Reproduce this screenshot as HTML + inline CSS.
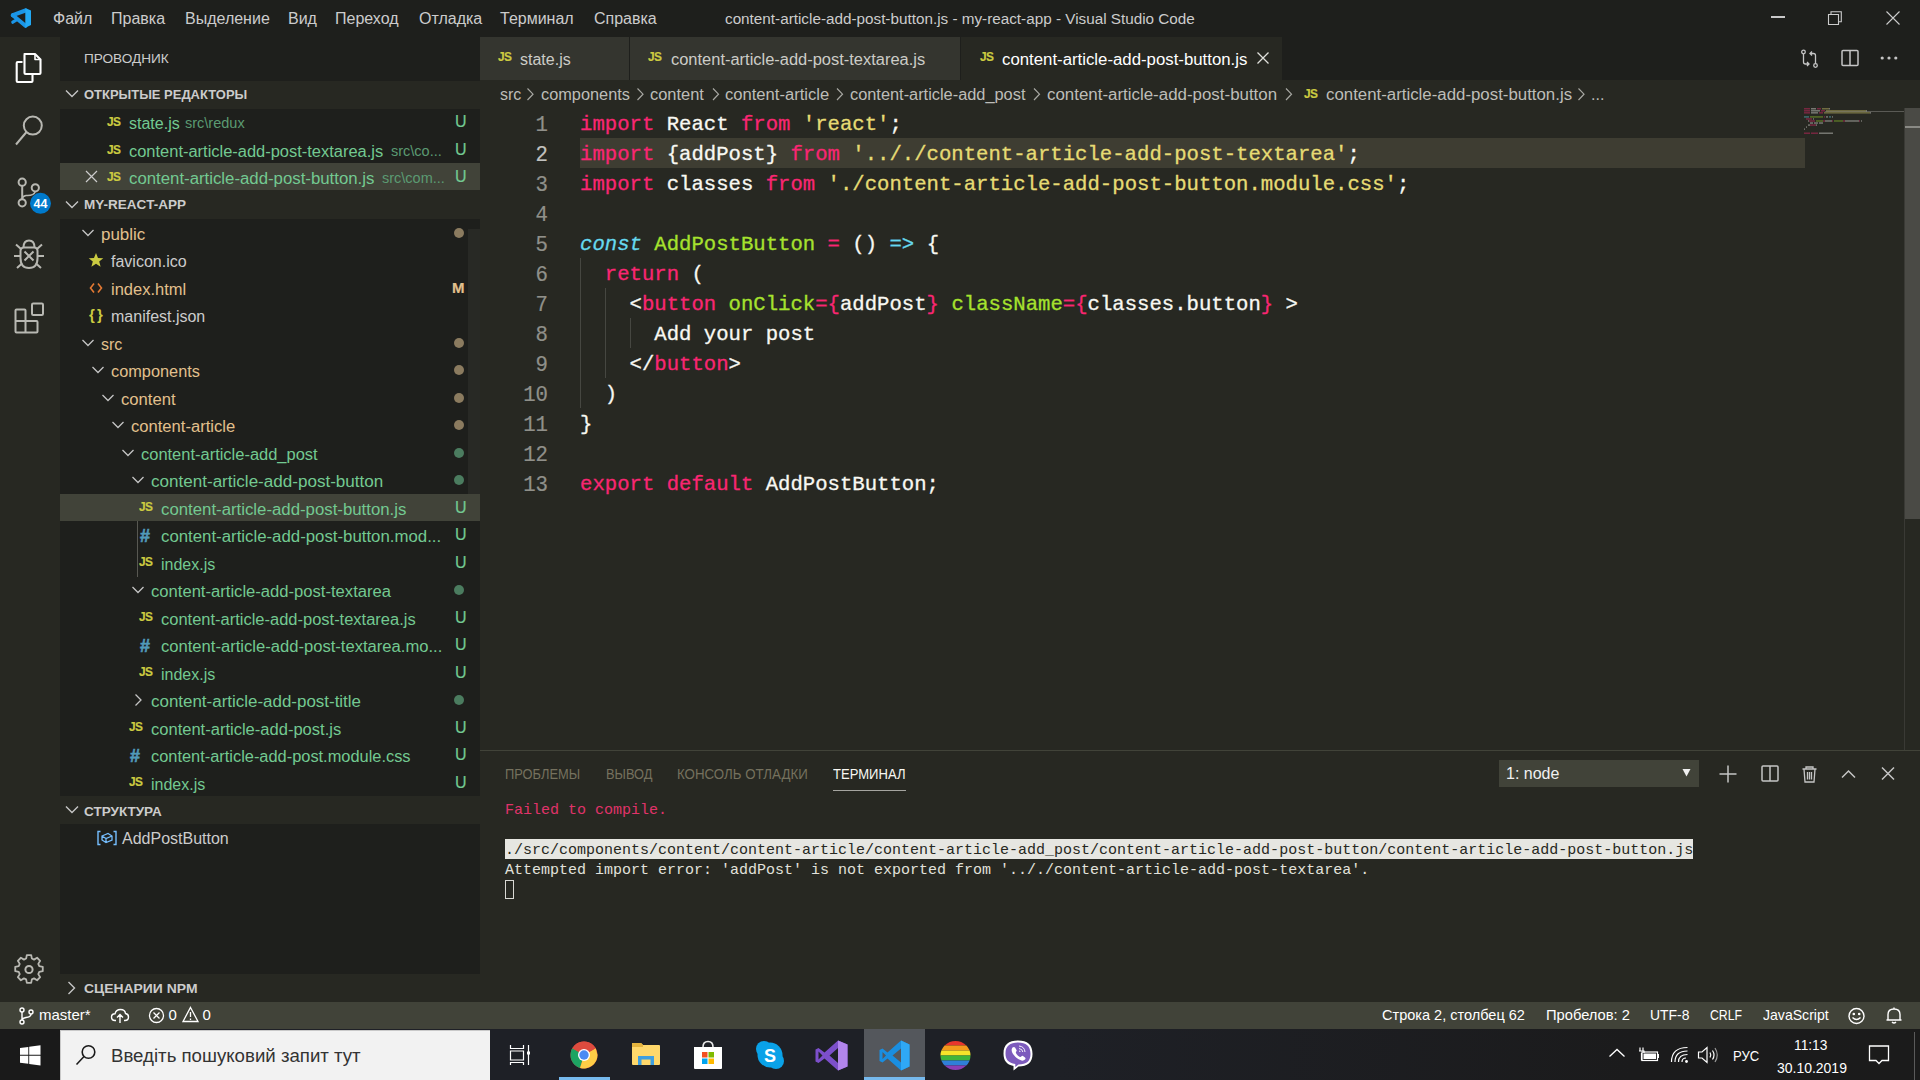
<!DOCTYPE html>
<html><head><meta charset="utf-8">
<style>
*{margin:0;padding:0;box-sizing:border-box}
html,body{width:1920px;height:1080px;overflow:hidden;background:#272822;font-family:"Liberation Sans",sans-serif;}
.a{position:absolute;white-space:pre}
svg.a{overflow:visible}
#title{left:0;top:0;width:1920px;height:37px;background:#1e1f1c}
#act{left:0;top:37px;width:60px;height:965px;background:#272822}
#side{left:60px;top:37px;width:420px;height:965px;background:#1e1f1c}
#tabs{left:480px;top:37px;width:1440px;height:43px;background:#1e1f1c}
#crumbs{left:480px;top:80px;width:1440px;height:28px;background:#272822}
#editor{left:480px;top:108px;width:1440px;height:642px;background:#272822}
#panel{left:480px;top:750px;width:1440px;height:252px;background:#272822;border-top:1px solid #414339}
#status{left:0;top:1002px;width:1920px;height:27px;background:#414339}
#task{left:0;top:1029px;width:1920px;height:51px;background:linear-gradient(90deg,#1e2026 0%,#1e2026 55%,#1b1b1c 85%,#1b1b1b 100%)}
.menu{top:8.5px;font-size:16px;line-height:20px;color:#cccccc}
.code{font-family:"Liberation Mono",monospace;font-size:20.63px;line-height:30px;color:#f8f8f2;-webkit-text-stroke:0.3px}
.ln{font-family:"Liberation Mono",monospace;font-size:22px;line-height:30px;color:#90908a;text-align:right;width:60px;left:488px;transform:translateY(0.5px) scaleX(0.94);transform-origin:100% 0;-webkit-text-stroke:0.2px}
.k{color:#f92672}.s{color:#e6db74}.f{color:#a6e22e}.c{color:#66d9ef;font-style:italic}.op{color:#66d9ef}
.rt{font-size:16px;line-height:27.5px}
.g{color:#73c991}.m{color:#e2c08d}.w{color:#cccccc}
.hdr{font-weight:bold;font-size:13.5px;line-height:28px;color:#cccccc}
.js{font-weight:bold;color:#cbcb41;font-size:13.5px;line-height:16px;letter-spacing:-0.7px;transform:translateY(-1.2px) scaleX(0.88);transform-origin:0 0;-webkit-text-stroke:0.2px}
.hash{font-weight:bold;color:#519aba;font-size:18px;line-height:18px;-webkit-text-stroke:0.6px;transform:translateY(1px)}
.json{font-weight:bold;color:#cbcb41;font-size:15px;line-height:18px;letter-spacing:-1px}
.dot{width:10px;height:10px;border-radius:50%}
.deco{font-size:16px;-webkit-text-stroke:0.2px;transform:translateY(-2px)}
.tab{font-size:16px;line-height:20px;color:#ccccc7}
.bc{font-size:16px;line-height:20px;color:#bdbdb8}
.st{font-size:15px;line-height:20px;color:#ffffff}
.term{font-family:"Liberation Mono",monospace;font-size:15px;line-height:20px;color:#e2e2dc}
.ptitle{font-size:14.5px;line-height:20px;color:#75715e}
</style></head><body>
<div class="a" id="title"></div>
<div class="a" id="act"></div>
<div class="a" id="side"></div>
<div class="a" id="tabs"></div>
<div class="a" id="crumbs"></div>
<div class="a" id="editor"></div>
<div class="a" id="panel"></div>
<div class="a" id="status"></div>
<div class="a" id="task"></div>

<!-- vscode logo -->
<svg class="a" style="left:0;top:0" width="40" height="37" viewBox="0 0 40 37"><g stroke="#1b95e6" stroke-width="4" stroke-linecap="round" fill="none"><path d="M25.5 10.5 L12.8 15.2"/><path d="M12.8 15.2 L25.5 25.8"/><path d="M17.2 19.5 L12.8 22.2" stroke-width="3.2"/></g><path d="M25.3 7.9 L31 10.5 V25 L25.3 27.7 Z" fill="#22a9f4"/></svg>
<div class="a menu" style="left:53px">Файл</div>
<div class="a menu" style="left:111px">Правка</div>
<div class="a menu" style="left:185px">Выделение</div>
<div class="a menu" style="left:288px">Вид</div>
<div class="a menu" style="left:335px">Переход</div>
<div class="a menu" style="left:419px">Отладка</div>
<div class="a menu" style="left:500px">Терминал</div>
<div class="a menu" style="left:594px">Справка</div>
<div class="a menu" style="left:725px;font-size:15.28px">content-article-add-post-button.js - my-react-app - Visual Studio Code</div>
<!-- window controls -->
<div class="a" style="left:1771px;top:16px;width:14px;height:1.6px;background:#c8c8c8"></div>
<svg class="a" style="left:1828px;top:11px" width="14" height="14" viewBox="0 0 14 14"><path d="M0.5 3.5 H10.5 V13.5 H0.5 Z M3 3.5 V0.8 H13.3 V10.8 H10.5" fill="none" stroke="#cccccc" stroke-width="1.1"/></svg>
<svg class="a" style="left:1886px;top:11px" width="14" height="14" viewBox="0 0 14 14"><path d="M0.5 0.5 L13.5 13.5 M13.5 0.5 L0.5 13.5" fill="none" stroke="#cccccc" stroke-width="1.1"/></svg>

<!-- activity bar icons -->
<svg class="a" style="left:0;top:37px" width="60" height="320" viewBox="0 37 60 320">
 <g fill="none" stroke="#ffffff" stroke-width="2.1" stroke-linejoin="round">
  <path d="M22.5 62 H17.7 Q16.7 62 16.7 63 V81 Q16.7 82 17.7 82 H31.5 Q32.5 82 32.5 81 V75"/>
  <path d="M24.5 54 H35 L40.5 59.5 V73 Q40.5 74 39.5 74 H25.5 Q24.5 74 24.5 73 V55 Q24.5 54 25.5 54 Z"/>
  <path d="M35 54.5 V59.5 H40" stroke-width="1.6"/>
 </g>
 <g fill="none" stroke="#b8b8b2" stroke-width="2">
  <circle cx="32.8" cy="125.6" r="9"/>
  <path d="M26.5 132 L16 144.5"/>
  <circle cx="22.2" cy="182.2" r="3.6"/>
  <circle cx="35.3" cy="187.8" r="3.6"/>
  <circle cx="22.2" cy="202.8" r="3.6"/>
  <path d="M22.2 185.8 V199.2"/>
  <path d="M35.3 191.4 Q34 196 26 195.5 Q22.5 196 22.2 199" stroke-width="1.6"/>
  <path d="M20.5 251 Q20.5 247.5 24 247.5 H34 Q37.5 247.5 37.5 251 V258 Q37.5 268 29 268 Q20.5 268 20.5 258 Z"/>
  <path d="M23.5 247.5 Q23.5 240.5 29 240.5 Q34.5 240.5 34.5 247.5"/>
  <path d="M16 244.5 L21 249 M42 244.5 L37 249 M14 256 H20 M44 256 H38 M17 268 L22 263.5 M41 268 L36 263.5"/>
  <path d="M24.5 251.5 L33.5 260.5 M33.5 251.5 L24.5 260.5"/>
 </g>
 <g fill="none" stroke="#b8b8b2" stroke-width="2">
  <path d="M16.5 309.5 H24.5 Q25.5 309.5 25.5 310.5 V321 H36.5 Q37.5 321 37.5 322 V331.5 Q37.5 332.5 36.5 332.5 H16.5 Q15.5 332.5 15.5 331.5 V310.5 Q15.5 309.5 16.5 309.5 Z"/>
  <path d="M15.5 321 H25.5 V332.5"/>
  <rect x="32" y="303.5" width="11" height="11.5" rx="1.2"/>
 </g>
 <circle cx="40.5" cy="203.3" r="10.5" fill="#007acc"/>
 <text x="40.5" y="207.8" text-anchor="middle" font-family="Liberation Sans" font-weight="bold" font-size="12.5" fill="#ffffff">44</text>
</svg>
<!-- gear -->
<svg class="a" style="left:13px;top:954px" width="32" height="32" viewBox="0 0 32 32">
 <path d="M13.6 2.5 H18.4 L19.2 6.4 L21.6 7.6 L25 5.5 L28.4 8.9 L26.3 12.3 L27.4 14.8 L31.3 15.6 V20.4 L27.4 21.2 L26.3 23.7 L28.4 27.1 L25 30.5 L21.6 28.4 L19.2 29.5 L18.4 33.4 H13.6 L12.8 29.5 L10.4 28.4 L7 30.5 L3.6 27.1 L5.7 23.7 L4.6 21.2 L0.7 20.4 V15.6 L4.6 14.8 L5.7 12.3 L3.6 8.9 L7 5.5 L10.4 7.6 L12.8 6.4 Z" transform="translate(1.6 -1.2) scale(0.9)" fill="none" stroke="#b8b8b2" stroke-width="2" stroke-linejoin="round"/>
 <circle cx="16" cy="15.5" r="3.6" fill="none" stroke="#b8b8b2" stroke-width="2"/>
</svg>

<!-- sidebar -->
<div class="a" style="left:84px;top:49px;font-size:13.6px;line-height:20px;color:#cccccc">ПРОВОДНИК</div>
<div class="a" style="left:60px;top:80.5px;width:420px;height:28px;background:#272822"></div>
<svg class="a" style="left:65px;top:87px" width="14" height="14" viewBox="0 0 14 14"><path d="M1 3.5 L7 9.5 L13 3.5" fill="none" stroke="#c5c5c5" stroke-width="1.4"/></svg>
<div class="a hdr" style="left:84px;top:80.5px;transform:scaleX(0.96);transform-origin:0 0">ОТКРЫТЫЕ РЕДАКТОРЫ</div>
<div class="a" style="left:60px;top:163px;width:420px;height:27px;background:#414339"></div>
<div class="a js" style="left:107px;top:115px">JS</div>
<div class="a rt g" style="left:129px;top:110px">state.js</div>
<div class="a rt" style="left:185px;top:110px;font-size:14.5px;color:#5b9a72">src\redux</div>
<div class="a rt g deco" style="left:455px;top:110px">U</div>
<div class="a js" style="left:107px;top:142.5px">JS</div>
<div class="a rt g" style="left:129px;top:137.5px;transform:scaleX(1.028);transform-origin:0 0">content-article-add-post-textarea.js</div>
<div class="a rt" style="left:391px;top:137.5px;font-size:14.5px;color:#5b9a72">src\co...</div>
<div class="a rt g deco" style="left:455px;top:137.5px">U</div>
<svg class="a" style="left:85px;top:170px" width="13" height="13" viewBox="0 0 13 13"><path d="M1 1 L12 12 M12 1 L1 12" fill="none" stroke="#cccccc" stroke-width="1.2"/></svg>
<div class="a js" style="left:107px;top:170px">JS</div>
<div class="a rt g" style="left:129px;top:165px;transform:scaleX(1.049);transform-origin:0 0">content-article-add-post-button.js</div>
<div class="a rt" style="left:382px;top:165px;font-size:14.5px;color:#5b9a72">src\com...</div>
<div class="a rt g deco" style="left:455px;top:165px">U</div>
<div class="a" style="left:60px;top:190px;width:420px;height:28.5px;background:#272822"></div>
<svg class="a" style="left:65px;top:197.5px" width="14" height="14" viewBox="0 0 14 14"><path d="M1 3.5 L7 9.5 L13 3.5" fill="none" stroke="#c5c5c5" stroke-width="1.4"/></svg>
<div class="a hdr" style="left:84px;top:190.75px">MY-REACT-APP</div>
<div class="a" style="left:137px;top:494px;width:1px;height:83px;background:#585852"></div>
<div class="a" style="left:468px;top:229px;width:12px;height:265px;background:#282925"></div>

<svg class="a" style="left:81px;top:225.5px" width="14" height="14" viewBox="0 0 14 14"><path d="M1.5 4 L7 9.5 L12.5 4" fill="none" stroke="#c5c5c5" stroke-width="1.3"/></svg>
<div class="a rt m" style="left:101px;top:220.55px;transform:scaleX(1.06);transform-origin:0 0">public</div>
<div class="a dot" style="left:454px;top:227.5px;background:#8b7b5f"></div>
<svg class="a" style="left:88px;top:252.0px" width="16" height="16" viewBox="0 0 16 16"><path d="M8 1 L10 6 L15.3 6.2 L11.2 9.5 L12.6 14.8 L8 11.8 L3.4 14.8 L4.8 9.5 L0.7 6.2 L6 6 Z" fill="#cbcb41"/></svg>
<div class="a rt w" style="left:111px;top:248.05px">favicon.ico</div>
<svg class="a" style="left:89px;top:280.5px" width="14" height="14" viewBox="0 0 14 14"><path d="M5 2.5 L1.5 7 L5 11.5 M9 2.5 L12.5 7 L9 11.5" fill="none" stroke="#e37933" stroke-width="1.6"/></svg>
<div class="a rt m" style="left:111px;top:275.55px;transform:scaleX(1.03);transform-origin:0 0">index.html</div>
<div class="a rt m deco" style="left:452px;top:275.55px;font-weight:bold;font-size:15px">M</div>
<div class="a json" style="left:89px;top:306.0px">{ }</div>
<div class="a rt w" style="left:111px;top:303.05px">manifest.json</div>
<svg class="a" style="left:81px;top:335.5px" width="14" height="14" viewBox="0 0 14 14"><path d="M1.5 4 L7 9.5 L12.5 4" fill="none" stroke="#c5c5c5" stroke-width="1.3"/></svg>
<div class="a rt m" style="left:101px;top:330.55px">src</div>
<div class="a dot" style="left:454px;top:337.5px;background:#8b7b5f"></div>
<svg class="a" style="left:91px;top:363.0px" width="14" height="14" viewBox="0 0 14 14"><path d="M1.5 4 L7 9.5 L12.5 4" fill="none" stroke="#c5c5c5" stroke-width="1.3"/></svg>
<div class="a rt m" style="left:111px;top:358.05px;transform:scaleX(1.02);transform-origin:0 0">components</div>
<div class="a dot" style="left:454px;top:365.0px;background:#8b7b5f"></div>
<svg class="a" style="left:101px;top:390.5px" width="14" height="14" viewBox="0 0 14 14"><path d="M1.5 4 L7 9.5 L12.5 4" fill="none" stroke="#c5c5c5" stroke-width="1.3"/></svg>
<div class="a rt m" style="left:121px;top:385.55px;transform:scaleX(1.04);transform-origin:0 0">content</div>
<div class="a dot" style="left:454px;top:392.5px;background:#8b7b5f"></div>
<svg class="a" style="left:111px;top:418.0px" width="14" height="14" viewBox="0 0 14 14"><path d="M1.5 4 L7 9.5 L12.5 4" fill="none" stroke="#c5c5c5" stroke-width="1.3"/></svg>
<div class="a rt m" style="left:131px;top:413.05px;transform:scaleX(1.037);transform-origin:0 0">content-article</div>
<div class="a dot" style="left:454px;top:420.0px;background:#8b7b5f"></div>
<svg class="a" style="left:121px;top:445.5px" width="14" height="14" viewBox="0 0 14 14"><path d="M1.5 4 L7 9.5 L12.5 4" fill="none" stroke="#c5c5c5" stroke-width="1.3"/></svg>
<div class="a rt g" style="left:141px;top:440.55px;transform:scaleX(1.029);transform-origin:0 0">content-article-add_post</div>
<div class="a dot" style="left:454px;top:447.5px;background:#4b7c5f"></div>
<svg class="a" style="left:131px;top:473.0px" width="14" height="14" viewBox="0 0 14 14"><path d="M1.5 4 L7 9.5 L12.5 4" fill="none" stroke="#c5c5c5" stroke-width="1.3"/></svg>
<div class="a rt g" style="left:151px;top:468.05px;transform:scaleX(1.066);transform-origin:0 0">content-article-add-post-button</div>
<div class="a dot" style="left:454px;top:475.0px;background:#4b7c5f"></div>
<div class="a" style="left:60px;top:493.75px;width:420px;height:27.5px;background:#414339"></div>
<div class="a js" style="left:139px;top:500.0px">JS</div>
<div class="a rt g" style="left:161px;top:495.55px;transform:scaleX(1.049);transform-origin:0 0">content-article-add-post-button.js</div>
<div class="a rt g deco" style="left:455px;top:495.55px">U</div>
<div class="a hash" style="left:140px;top:526.0px">#</div>
<div class="a rt g" style="left:161px;top:523.05px;transform:scaleX(1.05);transform-origin:0 0">content-article-add-post-button.mod...</div>
<div class="a rt g deco" style="left:455px;top:523.05px">U</div>
<div class="a js" style="left:139px;top:555.0px">JS</div>
<div class="a rt g" style="left:161px;top:550.55px">index.js</div>
<div class="a rt g deco" style="left:455px;top:550.55px">U</div>
<svg class="a" style="left:131px;top:583.0px" width="14" height="14" viewBox="0 0 14 14"><path d="M1.5 4 L7 9.5 L12.5 4" fill="none" stroke="#c5c5c5" stroke-width="1.3"/></svg>
<div class="a rt g" style="left:151px;top:578.05px;transform:scaleX(1.038);transform-origin:0 0">content-article-add-post-textarea</div>
<div class="a dot" style="left:454px;top:585.0px;background:#4b7c5f"></div>
<div class="a js" style="left:139px;top:610.0px">JS</div>
<div class="a rt g" style="left:161px;top:605.55px;transform:scaleX(1.03);transform-origin:0 0">content-article-add-post-textarea.js</div>
<div class="a rt g deco" style="left:455px;top:605.55px">U</div>
<div class="a hash" style="left:140px;top:636.0px">#</div>
<div class="a rt g" style="left:161px;top:633.05px;transform:scaleX(1.037);transform-origin:0 0">content-article-add-post-textarea.mo...</div>
<div class="a rt g deco" style="left:455px;top:633.05px">U</div>
<div class="a js" style="left:139px;top:665.0px">JS</div>
<div class="a rt g" style="left:161px;top:660.55px">index.js</div>
<div class="a rt g deco" style="left:455px;top:660.55px">U</div>
<svg class="a" style="left:131px;top:693.0px" width="14" height="14" viewBox="0 0 14 14"><path d="M4.5 1.5 L10 7 L4.5 12.5" fill="none" stroke="#c5c5c5" stroke-width="1.3"/></svg>
<div class="a rt g" style="left:151px;top:688.05px;transform:scaleX(1.059);transform-origin:0 0">content-article-add-post-title</div>
<div class="a dot" style="left:454px;top:695.0px;background:#4b7c5f"></div>
<div class="a js" style="left:129px;top:720.0px">JS</div>
<div class="a rt g" style="left:151px;top:715.55px;transform:scaleX(1.033);transform-origin:0 0">content-article-add-post.js</div>
<div class="a rt g deco" style="left:455px;top:715.55px">U</div>
<div class="a hash" style="left:130px;top:746.0px">#</div>
<div class="a rt g" style="left:151px;top:743.05px;transform:scaleX(1.024);transform-origin:0 0">content-article-add-post.module.css</div>
<div class="a rt g deco" style="left:455px;top:743.05px">U</div>
<div class="a js" style="left:129px;top:775.0px">JS</div>
<div class="a rt g" style="left:151px;top:770.55px">index.js</div>
<div class="a rt g deco" style="left:455px;top:770.55px">U</div>
<div class="a" style="left:60px;top:796.25px;width:420px;height:27.5px;background:#272822"></div>
<svg class="a" style="left:65px;top:803px" width="14" height="14" viewBox="0 0 14 14"><path d="M1 3.5 L7 9.5 L13 3.5" fill="none" stroke="#c5c5c5" stroke-width="1.4"/></svg>
<div class="a hdr" style="left:84px;top:798px">СТРУКТУРА</div>
<svg class="a" style="left:97px;top:830px" width="20" height="16" viewBox="0 0 20 16"><path d="M3.5 1.5 H1 V14.5 H3.5 M16.5 1.5 H19 V14.5 H16.5" fill="none" stroke="#75beff" stroke-width="1.4"/><path d="M5 6 L11 3.5 L15 6 V10 L9 12.5 L5 10 Z M5 6 L9 8.5 L15 6 M9 8.5 V12.5" fill="none" stroke="#75beff" stroke-width="1.3"/></svg>
<div class="a rt w" style="left:122px;top:825.3px">AddPostButton</div>
<div class="a" style="left:60px;top:974px;width:420px;height:28px;background:#272822"></div>
<svg class="a" style="left:65px;top:981px" width="14" height="14" viewBox="0 0 14 14"><path d="M3.5 1 L9.5 7 L3.5 13" fill="none" stroke="#c5c5c5" stroke-width="1.4"/></svg>
<div class="a hdr" style="left:84px;top:975.3px;transform:scaleX(1.03);transform-origin:0 0">СЦЕНАРИИ NPM</div>

<!-- tabs -->
<div class="a" style="left:480px;top:37px;width:149px;height:43px;background:#34352f"></div>
<div class="a" style="left:630px;top:37px;width:330px;height:43px;background:#34352f"></div>
<div class="a" style="left:961px;top:37px;width:321px;height:43px;background:#272822"></div>
<div class="a js" style="left:497.5px;top:50px">JS</div>
<div class="a tab" style="left:520px;top:49.5px">state.js</div>
<div class="a js" style="left:647.5px;top:50px">JS</div>
<div class="a tab" style="left:670.5px;top:49.5px;transform:scaleX(1.028);transform-origin:0 0">content-article-add-post-textarea.js</div>
<div class="a js" style="left:979.5px;top:50px">JS</div>
<div class="a tab" style="left:1002px;top:49.5px;color:#ffffff;transform:scaleX(1.049);transform-origin:0 0">content-article-add-post-button.js</div>
<svg class="a" style="left:1257px;top:52px" width="12" height="12" viewBox="0 0 12 12"><path d="M0.5 0.5 L11.5 11.5 M11.5 0.5 L0.5 11.5" fill="none" stroke="#e0e0dc" stroke-width="1.3"/></svg>
<!-- editor actions -->
<svg class="a" style="left:1800px;top:49px" width="20" height="20" viewBox="0 0 20 20" fill="none" stroke="#c5c5c5" stroke-width="1.3"><circle cx="3.5" cy="3" r="1.8"/><circle cx="15.5" cy="16.5" r="1.8"/><path d="M3.5 4.8 V13 Q3.5 15 5.5 15 H8.5 M7 13 L9 15 L7 17 M15.5 14.7 V6.5 Q15.5 4.5 13.5 4.5 H10.5 M12 2.5 L10 4.5 L12 6.5"/></svg>
<svg class="a" style="left:1841px;top:49px" width="18" height="18" viewBox="0 0 18 18" fill="none" stroke="#c5c5c5" stroke-width="1.5"><rect x="1" y="1.5" width="16" height="15" rx="1"/><path d="M9 1.5 V16.5"/></svg>
<svg class="a" style="left:1880px;top:55px" width="18" height="6" viewBox="0 0 18 6" fill="#c5c5c5"><circle cx="2.2" cy="3" r="1.6"/><circle cx="9" cy="3" r="1.6"/><circle cx="15.8" cy="3" r="1.6"/></svg>
<!-- breadcrumbs -->
<div class="a bc" style="left:500px;top:85px">src</div>
<div class="a bc" style="left:540.5px;top:85px;transform:scaleX(1.02);transform-origin:0 0">components</div>
<div class="a bc" style="left:650px;top:85px;transform:scaleX(1.027);transform-origin:0 0">content</div>
<div class="a bc" style="left:725px;top:85px;transform:scaleX(1.037);transform-origin:0 0">content-article</div>
<div class="a bc" style="left:850px;top:85px;transform:scaleX(1.022);transform-origin:0 0">content-article-add_post</div>
<div class="a bc" style="left:1046.5px;top:85px;transform:scaleX(1.056);transform-origin:0 0">content-article-add-post-button</div>
<div class="a js" style="left:1304px;top:87px">JS</div>
<div class="a bc" style="left:1326px;top:85px;transform:scaleX(1.052);transform-origin:0 0">content-article-add-post-button.js</div>
<div class="a bc" style="left:1591px;top:85px">...</div>
<svg class="a" style="left:0;top:0" width="1920" height="120" fill="none" stroke="#a8a8a3" stroke-width="1.2">
 <path d="M527.5 88.5 L533 94.2 L527.5 100"/>
 <path d="M637.5 88.5 L643 94.2 L637.5 100"/>
 <path d="M713 88.5 L718.5 94.2 L713 100"/>
 <path d="M837 88.5 L842.5 94.2 L837 100"/>
 <path d="M1034 88.5 L1039.5 94.2 L1034 100"/>
 <path d="M1286 88.5 L1291.5 94.2 L1286 100"/>
 <path d="M1578.5 88.5 L1584 94.2 L1578.5 100"/>
</svg>

<!-- code -->
<div class="a" style="left:580px;top:138px;width:1225px;height:30px;background:#3e3d32"></div>
<div class="a ln" style="top:109.8px">1</div>
<div class="a ln" style="top:139.8px;color:#c2c2bf">2</div>
<div class="a ln" style="top:169.8px">3</div>
<div class="a ln" style="top:199.8px">4</div>
<div class="a ln" style="top:229.8px">5</div>
<div class="a ln" style="top:259.8px">6</div>
<div class="a ln" style="top:289.8px">7</div>
<div class="a ln" style="top:319.8px">8</div>
<div class="a ln" style="top:349.8px">9</div>
<div class="a ln" style="top:379.8px">10</div>
<div class="a ln" style="top:409.8px">11</div>
<div class="a ln" style="top:439.8px">12</div>
<div class="a ln" style="top:469.8px">13</div>
<div class="a" style="left:580px;top:258px;width:1px;height:150px;background:#464741"></div>
<div class="a" style="left:605px;top:288px;width:1px;height:90px;background:#464741"></div>
<div class="a" style="left:630px;top:318px;width:1px;height:30px;background:#464741"></div>
<div class="a code" style="left:580px;top:109.8px"><span class="k">import</span> React <span class="k">from</span> <span class="s">'react'</span>;</div>
<div class="a code" style="left:580px;top:139.8px"><span class="k">import</span> {addPost} <span class="k">from</span> <span class="s">'.././content-article-add-post-textarea'</span>;</div>
<div class="a code" style="left:580px;top:169.8px"><span class="k">import</span> classes <span class="k">from</span> <span class="s">'./content-article-add-post-button.module.css'</span>;</div>
<div class="a code" style="left:580px;top:229.8px"><span class="c">const</span> <span class="f">AddPostButton</span> <span class="k">=</span> () <span class="op">=&gt;</span> {</div>
<div class="a code" style="left:580px;top:259.8px">  <span class="k">return</span> (</div>
<div class="a code" style="left:580px;top:289.8px">    &lt;<span class="k">button</span> <span class="f">onClick</span><span class="k">={</span>addPost<span class="k">}</span> <span class="f">className</span><span class="k">={</span>classes.button<span class="k">}</span> &gt;</div>
<div class="a code" style="left:580px;top:319.8px">      Add your post</div>
<div class="a code" style="left:580px;top:349.8px">    &lt;/<span class="k">button</span>&gt;</div>
<div class="a code" style="left:580px;top:379.8px">  )</div>
<div class="a code" style="left:580px;top:409.8px">}</div>
<div class="a code" style="left:580px;top:469.8px"><span class="k">export</span> <span class="k">default</span> AddPostButton;</div>
<!-- minimap -->
<div class="a" style="left:1825px;top:110.5px;width:79px;height:1.5px;background:#5a5a55"></div>
<svg class="a" style="left:1804px;top:107px" width="100" height="32" viewBox="0 0 100 32"><g opacity="0.38"><rect x="0" y="1.00" width="6" height="1.5" fill="#f92672"/><rect x="7" y="1.00" width="5" height="1.5" fill="#f8f8f2"/><rect x="13" y="1.00" width="4" height="1.5" fill="#f92672"/><rect x="18" y="1.00" width="7" height="1.5" fill="#e6db74"/><rect x="25" y="1.00" width="1" height="1.5" fill="#f8f8f2"/><rect x="0" y="3.04" width="6" height="1.5" fill="#f92672"/><rect x="7" y="3.04" width="9" height="1.5" fill="#f8f8f2"/><rect x="17" y="3.04" width="4" height="1.5" fill="#f92672"/><rect x="22" y="3.04" width="40" height="1.5" fill="#e6db74"/><rect x="62" y="3.04" width="1" height="1.5" fill="#f8f8f2"/><rect x="0" y="5.08" width="6" height="1.5" fill="#f92672"/><rect x="7" y="5.08" width="7" height="1.5" fill="#f8f8f2"/><rect x="15" y="5.08" width="4" height="1.5" fill="#f92672"/><rect x="20" y="5.08" width="46" height="1.5" fill="#e6db74"/><rect x="66" y="5.08" width="1" height="1.5" fill="#f8f8f2"/><rect x="0" y="9.16" width="5" height="1.5" fill="#66d9ef"/><rect x="6" y="9.16" width="13" height="1.5" fill="#a6e22e"/><rect x="20" y="9.16" width="1" height="1.5" fill="#f92672"/><rect x="22" y="9.16" width="2" height="1.5" fill="#f8f8f2"/><rect x="25" y="9.16" width="2" height="1.5" fill="#66d9ef"/><rect x="28" y="9.16" width="1" height="1.5" fill="#f8f8f2"/><rect x="2" y="11.20" width="6" height="1.5" fill="#f92672"/><rect x="9" y="11.20" width="1" height="1.5" fill="#f8f8f2"/><rect x="4" y="13.24" width="1" height="1.5" fill="#f8f8f2"/><rect x="5" y="13.24" width="6" height="1.5" fill="#f92672"/><rect x="12" y="13.24" width="7" height="1.5" fill="#a6e22e"/><rect x="19" y="13.24" width="2" height="1.5" fill="#f92672"/><rect x="21" y="13.24" width="7" height="1.5" fill="#f8f8f2"/><rect x="28" y="13.24" width="1" height="1.5" fill="#f92672"/><rect x="30" y="13.24" width="9" height="1.5" fill="#a6e22e"/><rect x="39" y="13.24" width="2" height="1.5" fill="#f92672"/><rect x="41" y="13.24" width="14" height="1.5" fill="#f8f8f2"/><rect x="55" y="13.24" width="1" height="1.5" fill="#f92672"/><rect x="57" y="13.24" width="1" height="1.5" fill="#f8f8f2"/><rect x="6" y="15.28" width="3" height="1.5" fill="#f8f8f2"/><rect x="10" y="15.28" width="4" height="1.5" fill="#f8f8f2"/><rect x="15" y="15.28" width="4" height="1.5" fill="#f8f8f2"/><rect x="4" y="17.32" width="2" height="1.5" fill="#f8f8f2"/><rect x="6" y="17.32" width="6" height="1.5" fill="#f92672"/><rect x="12" y="17.32" width="1" height="1.5" fill="#f8f8f2"/><rect x="2" y="19.36" width="1" height="1.5" fill="#f8f8f2"/><rect x="0" y="21.40" width="1" height="1.5" fill="#f8f8f2"/><rect x="0" y="25.48" width="6" height="1.5" fill="#f92672"/><rect x="7" y="25.48" width="7" height="1.5" fill="#f92672"/><rect x="15" y="25.48" width="14" height="1.5" fill="#f8f8f2"/></g></svg>
<!-- scrollbar -->
<div class="a" style="left:1904px;top:108px;width:1px;height:642px;background:#3a3a35"></div>
<div class="a" style="left:1905px;top:108px;width:15px;height:411px;background:#4a4a45"></div>
<div class="a" style="left:1905px;top:126px;width:15px;height:2px;background:#8a8a85"></div>

<!-- panel -->
<div class="a ptitle" style="left:505px;top:764px;transform:scaleX(0.887);transform-origin:0 0">ПРОБЛЕМЫ</div>
<div class="a ptitle" style="left:605.5px;top:764px;transform:scaleX(0.884);transform-origin:0 0">ВЫВОД</div>
<div class="a ptitle" style="left:677px;top:764px;transform:scaleX(0.917);transform-origin:0 0">КОНСОЛЬ ОТЛАДКИ</div>
<div class="a ptitle" style="left:833px;top:764px;color:#f8f8f2;transform:scaleX(0.9);transform-origin:0 0">ТЕРМИНАЛ</div>
<div class="a" style="left:833px;top:789.5px;width:73px;height:1px;background:#a5a5a0"></div>
<div class="a" style="left:1499px;top:760px;width:200px;height:27px;background:#414339"></div>
<div class="a" style="left:1506px;top:763.5px;font-size:16px;line-height:20px;color:#f0f0f0">1: node</div>
<svg class="a" style="left:1682px;top:768px" width="9" height="9" viewBox="0 0 9 9"><path d="M0.5 1 H8.5 L4.5 8.5 Z" fill="#f0f0f0"/></svg>
<svg class="a" style="left:1718px;top:764px" width="180" height="20" viewBox="0 0 180 20" fill="none" stroke="#c5c5c5" stroke-width="1.5">
 <path d="M10 1.5 V18.5 M1.5 10 H18.5"/>
 <rect x="44" y="2" width="16" height="15" rx="1"/><path d="M52 2 V17"/>
 <path d="M84.5 5 H98.5 M88 5 V3 H95 V5 M86 5 L87 18 H96 L97 5 M89.5 8 V15.5 M91.5 8 V15.5 M93.5 8 V15.5" stroke-width="1.3"/>
 <path d="M124 13.5 L130.5 7 L137 13.5"/>
 <path d="M164 3.5 L176 15.5 M176 3.5 L164 15.5"/>
</svg>
<!-- terminal -->
<div class="a term" style="left:505px;top:801px;color:#e0336a">Failed to compile.</div>
<div class="a" style="left:505px;top:839px;width:1188px;height:20px;background:#e6e6e1"></div>
<div class="a term" style="left:505px;top:840.5px;color:#272822">./src/components/content/content-article/content-article-add_post/content-article-add-post-button/content-article-add-post-button.js</div>
<div class="a term" style="left:505px;top:860.8px">Attempted import error: 'addPost' is not exported from '.././content-article-add-post-textarea'.</div>
<div class="a" style="left:505px;top:880px;width:9px;height:19px;border:1px solid #d8d8d3"></div>

<!-- status bar -->
<svg class="a" style="left:18px;top:1007px" width="18" height="18" viewBox="0 0 18 18" fill="none" stroke="#ffffff" stroke-width="1.4"><circle cx="4" cy="3" r="2"/><circle cx="13" cy="5" r="2"/><circle cx="4" cy="15" r="2"/><path d="M4 5 V13 M13 7 Q13 10 8 10.5 Q4.5 11 4 13"/></svg>
<div class="a st" style="left:39px;top:1005.2px">master*</div>
<svg class="a" style="left:110px;top:1007px" width="20" height="18" viewBox="0 0 20 18" fill="none" stroke="#ffffff" stroke-width="1.4"><path d="M6 13.5 H5 Q1.5 13.5 1.5 10 Q1.5 6.8 5 6.8 Q6 2.5 10.5 2.5 Q15 2.5 15.5 6.5 Q18.5 7 18.5 10 Q18.5 13.5 15 13.5 H14 M10 16 V8 M7 10.5 L10 7.5 L13 10.5"/></svg>
<svg class="a" style="left:148px;top:1007px" width="17" height="17" viewBox="0 0 17 17" fill="none" stroke="#ffffff" stroke-width="1.3"><circle cx="8.5" cy="8.5" r="7"/><path d="M5.5 5.5 L11.5 11.5 M11.5 5.5 L5.5 11.5"/></svg>
<div class="a st" style="left:168.5px;top:1005.2px">0</div>
<svg class="a" style="left:182px;top:1006px" width="17" height="17" viewBox="0 0 17 17" fill="none" stroke="#ffffff" stroke-width="1.3"><path d="M8.5 1.5 L16 15.5 H1 Z M8.5 6 V11 M8.5 12.5 V14"/></svg>
<div class="a st" style="left:202.5px;top:1005.2px">0</div>
<div class="a st" style="left:1382px;top:1005.2px;transform:scaleX(0.968);transform-origin:0 0">Строка 2, столбец 62</div>
<div class="a st" style="left:1545.5px;top:1005.2px;transform:scaleX(0.98);transform-origin:0 0">Пробелов: 2</div>
<div class="a st" style="left:1650px;top:1005.2px;transform:scaleX(0.928);transform-origin:0 0">UTF-8</div>
<div class="a st" style="left:1710px;top:1005.2px;transform:scaleX(0.817);transform-origin:0 0">CRLF</div>
<div class="a st" style="left:1762.5px;top:1005.2px;transform:scaleX(0.938);transform-origin:0 0">JavaScript</div>
<svg class="a" style="left:1847px;top:1007px" width="19" height="19" viewBox="0 0 19 19" fill="none" stroke="#ffffff" stroke-width="1.4"><circle cx="9.5" cy="9" r="7.5"/><path d="M5.5 10.5 Q9.5 14.5 13.5 10.5"/><circle cx="6.8" cy="7" r="0.6" fill="#fff"/><circle cx="12.2" cy="7" r="0.6" fill="#fff"/></svg>
<svg class="a" style="left:1885px;top:1006px" width="18" height="19" viewBox="0 0 18 19" fill="none" stroke="#ffffff" stroke-width="1.4"><path d="M3 14 V8.5 Q3 3 9 3 Q15 3 15 8.5 V14 H3 Z M1.5 14 H16.5 M7 16 Q9 18 11 16 M9 1.5 V3"/></svg>

<!-- taskbar -->
<div class="a" style="left:0;top:1029px;width:60px;height:51px;background:#1a1a1a"></div>
<svg class="a" style="left:20px;top:1045px" width="21" height="21" viewBox="0 0 21 21" fill="#ffffff"><path d="M0 3 L8.3 1.9 V9.8 H0 Z M9.2 1.8 L20.5 0.3 V9.8 H9.2 Z M0 10.8 H8.3 V18.8 L0 17.8 Z M9.2 10.8 H20.5 V20.5 L9.2 19 Z"/></svg>
<div class="a" style="left:60px;top:1029.5px;width:430px;height:50.5px;background:#f2f2f2;border:1px solid #c9c9c9;border-bottom:none;border-right:none"></div>
<svg class="a" style="left:75px;top:1044px" width="22" height="22" viewBox="0 0 22 22" fill="none" stroke="#1a1a1a" stroke-width="1.6"><circle cx="13.5" cy="8" r="6.3"/><path d="M9 12.5 L1.5 20.5"/></svg>
<div class="a" style="left:110.5px;top:1044px;font-size:17.5px;line-height:24px;color:#333333;transform:scaleX(1.065);transform-origin:0 0">Введіть пошуковий запит тут</div>
<svg class="a" style="left:508px;top:1043px" width="24" height="24" viewBox="0 0 24 24" fill="none" stroke="#ffffff" stroke-width="1.2"><path d="M2.5 2 V5.5 H15.5 V2 M2.5 8 H15.5 V17 H2.5 Z M2.5 22 V19.5 H15.5 V22 M20.5 2 V22"/><rect x="19" y="8.5" width="3" height="3" fill="#fff" stroke="none"/></svg>
<!-- chrome -->
<svg class="a" style="left:570px;top:1040.5px" width="28" height="28" viewBox="0 0 28 28"><circle cx="14" cy="14" r="13.5" fill="#dd4b3e"/><path d="M14 14 L2.3 7.25 A13.5 13.5 0 0 0 10 26.9 Z" fill="#1da462"/><path d="M14 14 L10 26.9 A13.5 13.5 0 0 0 27.5 14 L25.7 7.25 Z" fill="#ffcd46"/><path d="M14 14 L2.3 7.25 A13.5 13.5 0 0 1 25.7 7.25 Z" fill="#dd4b3e"/><circle cx="14" cy="14" r="6" fill="#ffffff"/><circle cx="14" cy="14" r="4.7" fill="#4a8af4"/></svg>
<div class="a" style="left:559px;top:1077px;width:51px;height:3px;background:#76b9ed"></div>
<!-- explorer -->
<svg class="a" style="left:632px;top:1042px" width="28" height="25" viewBox="0 0 28 25"><path d="M0 2 Q0 1 1 1 H9 L11 3 H27 Q28 3 28 4 V22 Q28 23 27 23 H1 Q0 23 0 22 Z" fill="#ffd86b"/><path d="M0 2 Q0 1 1 1 H9 L11 3 V5 H0 Z" fill="#e5b43e"/><path d="M6 23 V14 H22 V23 H18.5 V17.5 H9.5 V23 Z" fill="#3f9fe0"/></svg>
<!-- store -->
<svg class="a" style="left:693px;top:1040px" width="30" height="30" viewBox="0 0 30 30"><path d="M10 7 Q10 1.5 15 1.5 Q20 1.5 20 7" fill="none" stroke="#e8e8e8" stroke-width="1.6"/><path d="M1 7 H29 V28 Q29 29 28 29 H2 Q1 29 1 28 Z" fill="#ffffff"/><rect x="9" y="12" width="5.5" height="5.5" fill="#f25022"/><rect x="15.5" y="12" width="5.5" height="5.5" fill="#7fba00"/><rect x="9" y="18.5" width="5.5" height="5.5" fill="#00a4ef"/><rect x="15.5" y="18.5" width="5.5" height="5.5" fill="#ffb900"/></svg>
<!-- skype -->
<svg class="a" style="left:755px;top:1040px" width="30" height="30" viewBox="0 0 30 30"><circle cx="9" cy="9" r="8" fill="#0aa2e8"/><circle cx="21" cy="21" r="8" fill="#0aa2e8"/><circle cx="15" cy="15" r="12.5" fill="#0aa2e8"/><text x="15" y="21.5" text-anchor="middle" font-family="Liberation Sans" font-weight="bold" font-size="18" fill="#ffffff">S</text></svg>
<!-- visual studio -->
<svg class="a" style="left:815px;top:1040px" width="33" height="31" viewBox="0 0 33 31"><path d="M23 0.5 L32.5 4.5 V26.5 L23 30.5 L9.5 18.5 L3.5 23 L0.5 21.5 V9.5 L3.5 8 L9.5 12.5 Z M23 8 L14.5 15.5 L23 23 Z M3.5 11.5 V19.5 L7.5 15.5 Z" fill="#7c4fca" fill-rule="evenodd"/><path d="M23 0.5 L32.5 4.5 V26.5 L23 30.5 Z" fill="#b285ec"/></svg>
<!-- vscode active -->
<div class="a" style="left:864px;top:1029px;width:61px;height:51px;background:#54575c"></div>
<div class="a" style="left:864px;top:1077px;width:61px;height:3px;background:#76b9ed"></div>
<svg class="a" style="left:879px;top:1040px" width="31" height="31" viewBox="0 0 31 31"><path d="M22 0.5 L30.5 4.5 V26.5 L22 30.5 L8.5 18.5 L3.5 22.5 L0.5 21 V10 L3.5 8.5 L8.5 12.5 Z M22 8.5 L13.5 15.5 L22 22.5 Z M3.5 12 V19 L7 15.5 Z" fill="#1a8ee0" fill-rule="evenodd"/><path d="M22 0.5 L30.5 4.5 V26.5 L22 30.5 Z" fill="#2fa8f5"/></svg>
<!-- rainbow ball -->
<svg class="a" style="left:940px;top:1040px" width="31" height="31" viewBox="0 0 31 31"><defs><clipPath id="cb"><ellipse cx="15.5" cy="15.5" rx="15" ry="14.5"/></clipPath></defs><g clip-path="url(#cb)"><rect x="0" y="0" width="31" height="5.5" fill="#e8362d"/><rect x="0" y="5.5" width="31" height="5" fill="#f39a1c"/><rect x="0" y="10.5" width="31" height="5" fill="#f6e42a"/><rect x="0" y="15.5" width="31" height="5" fill="#3fb53a"/><rect x="0" y="20.5" width="31" height="5" fill="#2f7fd8"/><rect x="0" y="25.5" width="31" height="6" fill="#8a3fb5"/></g></svg>
<!-- viber -->
<svg class="a" style="left:1003px;top:1040px" width="30" height="31" viewBox="0 0 30 31"><path d="M15 0.5 C24.5 0.5 29.5 4.5 29.5 14 C29.5 22.5 24.5 26.5 15.5 26.5 L10.5 30.5 V26 C3.5 24.5 0.5 20.5 0.5 13.5 C0.5 4.5 5.5 0.5 15 0.5 Z" fill="#ffffff"/><path d="M15 2.5 C23 2.5 27.5 6 27.5 14 C27.5 21 23.5 24.5 15.5 24.5 L12.3 27 V24 C5.5 23 2.5 19.5 2.5 13.5 C2.5 6 7 2.5 15 2.5 Z" fill="#7d5bbd"/><path d="M9.5 7.5 Q11 6.5 12 7.5 L13.5 10 Q14 11 13 11.8 Q12.5 12.5 13.5 14 Q15 16 16.5 16.8 Q17.8 17.3 18.3 16.5 Q19 15.5 20 16 L22 17.5 Q23 18.5 22 19.5 Q20.5 21 18.5 20.5 Q13.5 19 10 14 Q7.5 10 9.5 7.5 Z" fill="#ffffff"/><path d="M16 6 Q21.5 6.5 22 12 M16 8.5 Q19.5 9 19.8 12 M16 11 Q17.3 11.2 17.5 12" fill="none" stroke="#ffffff" stroke-width="0.9"/></svg>
<!-- tray -->
<svg class="a" style="left:1608px;top:1048px" width="18" height="10" viewBox="0 0 18 10" fill="none" stroke="#ffffff" stroke-width="1.3"><path d="M1.5 8.5 L9 1.5 L16.5 8.5"/></svg>
<svg class="a" style="left:1637px;top:1047px" width="23" height="15" viewBox="0 0 23 15" fill="none" stroke="#ffffff" stroke-width="1.2"><path d="M3 0.5 V4 M6 0.5 V4 M2 4 H7 V6 M4.5 6 V13.5"/><rect x="5" y="5" width="15.5" height="8.5"/><rect x="6.5" y="6.5" width="12.5" height="5.5" fill="#ffffff" stroke="none"/><rect x="20.5" y="7" width="1.5" height="4" fill="#fff" stroke="none"/></svg>
<svg class="a" style="left:1670px;top:1046px" width="20" height="18" viewBox="0 0 20 18" fill="none" stroke="#ffffff" stroke-width="1.2"><path d="M1.5 16 Q1.5 1.5 17.5 1.5 M5 16 Q5 5 17.5 5 M8.5 16 Q8.5 8.5 17.5 8.5 M12 16 Q12 12 16 12"/><circle cx="16.5" cy="15.5" r="1.4" fill="#fff" stroke="none"/></svg>
<svg class="a" style="left:1697px;top:1046px" width="22" height="18" viewBox="0 0 22 18" fill="none" stroke="#ffffff" stroke-width="1.2"><path d="M1.5 6 H5 L10 1.5 V16.5 L5 12 H1.5 Z M13 6.5 Q14.5 9 13 11.5 M15.5 4.5 Q18.5 9 15.5 13.5"/><path d="M18 2 Q22.5 9 18 16" stroke="#9a9a9a"/></svg>
<div class="a" style="left:1732.5px;top:1046.3px;font-size:14.8px;line-height:20px;color:#ffffff;transform:scaleX(0.885);transform-origin:0 0">РУС</div>
<div class="a" style="left:1794px;top:1034.5px;font-size:14.8px;line-height:20px;color:#ffffff;transform:scaleX(0.93);transform-origin:0 0">11:13</div>
<div class="a" style="left:1777px;top:1057.5px;font-size:14.8px;line-height:20px;color:#ffffff;transform:scaleX(0.944);transform-origin:0 0">30.10.2019</div>
<svg class="a" style="left:1868px;top:1044px" width="22" height="22" viewBox="0 0 22 22" fill="none" stroke="#ffffff" stroke-width="1.3"><path d="M1.5 2 H20.5 V16.5 H14 L11 19.5 L8 16.5 H1.5 Z"/></svg>
<div class="a" style="left:1914px;top:1032px;width:1px;height:48px;background:#5a5a5a"></div>
</body></html>
